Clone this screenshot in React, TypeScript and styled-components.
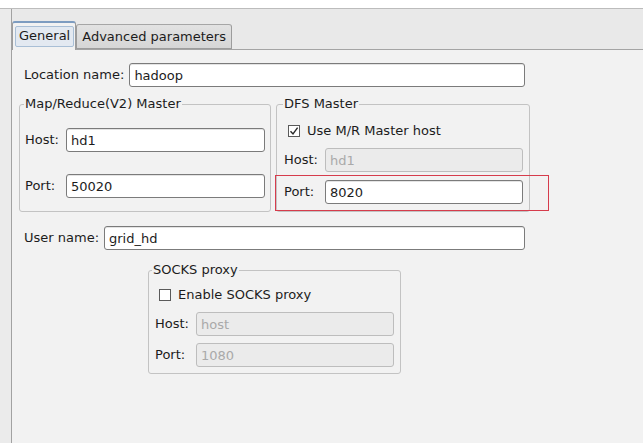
import { FC, ReactNode } from "react";
import styled, { createGlobalStyle } from "styled-components";

const GlobalStyle = createGlobalStyle`
  html, body {
    margin: 0;
    padding: 0;
    background: #ebebeb;
  }
  body {
    font-family: "DejaVu Sans", "Liberation Sans", sans-serif;
    font-size: 13px;
    color: #1c1c1c;
  }
`;

const Page = styled.div`
  width: 643px;
  height: 443px;
  overflow: hidden;
  display: flex;
  flex-direction: column;
  background: #ebebeb;
`;

const TopStrip = styled.div`
  height: 8px;
  flex: none;
  background: #ffffff;
  border-bottom: 1px solid #bcbcbc;
`;

const Body = styled.div`
  flex: 1;
  display: flex;
  min-height: 0;
`;

const Gutter = styled.div`
  width: 11px;
  flex: none;
  background: #ebebeb;
`;

const TabWidget = styled.div`
  flex: 1;
  display: flex;
  flex-direction: column;
  border-left: 1px solid #a2a2a2;
`;

const TabBar = styled.div`
  height: 40px;
  flex: none;
  display: flex;
  align-items: flex-end;
  background: #e9e9e9;
  border-bottom: 1px solid #a4a4a4;
`;

const Tab = styled.div<{ $active?: boolean }>`
  box-sizing: border-box;
  display: flex;
  align-items: center;
  height: ${({ $active }) => ($active ? "29px" : "25px")};
  margin-bottom: ${({ $active }) => ($active ? "-1px" : "0")};
  padding: ${({ $active }) => ($active ? "2px 1px 3px 2px" : "1px 1px 0")};
  border: 1px solid #9c9c9c;
  border-bottom: ${({ $active }) => ($active ? "none" : "1px solid #9c9c9c")};
  border-top: ${({ $active }) =>
    $active ? "2px solid #7d9cc0" : "1px solid #a6a6a6"};
  border-radius: 3px 3px 0 0;
  background: ${({ $active }) =>
    $active ? "#f2f2f2" : "linear-gradient(#e2e2e2, #d6d6d6)"};
  color: #1c1c1c;
`;

const TabLabel = styled.span<{ $focus?: boolean }>`
  padding: 1px 3px 2px;
  border: 1px solid ${({ $focus }) => ($focus ? "#a9bfd6" : "transparent")};
  border-radius: 2px;
  background: ${({ $focus }) => ($focus ? "#e3e9f1" : "transparent")};
  line-height: 16px;
`;

const Panel = styled.div`
  flex: 1;
  background: #f2f2f2;
  padding: 13px 0 0 12px;
`;

const Form = styled.div`
  width: 501px;
  display: flex;
  flex-direction: column;
`;

const Row = styled.div`
  display: flex;
  align-items: center;
  gap: 5px;
`;

const Label = styled.span`
  white-space: nowrap;
  line-height: 16px;
`;

const Input = styled.div<{ $disabled?: boolean }>`
  box-sizing: border-box;
  flex: 1;
  height: 24px;
  display: flex;
  align-items: center;
  padding: 0 4px;
  border: 1px solid ${({ $disabled }) => ($disabled ? "#bdbdbd" : "#7b7b7b")};
  border-radius: 3px;
  background: ${({ $disabled }) => ($disabled ? "#ebebeb" : "#ffffff")};
  color: ${({ $disabled }) => ($disabled ? "#a9a9a9" : "#1c1c1c")};
  box-shadow: ${({ $disabled }) =>
    $disabled ? "none" : "inset 0 1px 0 #e4e4e4"};
`;

const GroupRow = styled.div`
  display: flex;
  gap: 5px;
  margin: 9px -5px 0;
`;

const Group = styled.fieldset<{ $width: number; $pad: string }>`
  box-sizing: border-box;
  width: ${({ $width }) => $width}px;
  margin: 0;
  min-width: 0;
  padding: ${({ $pad }) => $pad};
  border: 1px solid #c3c3c3;
  border-radius: 3px;
  display: flex;
  flex-direction: column;
`;

const Legend = styled.legend<{ $indent: number }>`
  padding: 0 1px;
  margin-left: ${({ $indent }) => $indent}px;
  line-height: 16px;
`;

const FieldGrid = styled.div<{ $rowGap: number; $top: number }>`
  display: grid;
  grid-template-columns: auto 1fr;
  column-gap: 7px;
  row-gap: ${({ $rowGap }) => $rowGap}px;
  margin-top: ${({ $top }) => $top}px;
  align-items: center;
`;

const CheckRow = styled.label`
  display: flex;
  align-items: center;
  gap: 7px;
  height: 18px;
  margin-left: 4px;
`;

const CheckBox = styled.span`
  box-sizing: border-box;
  width: 12px;
  height: 12px;
  border: 1px solid #5a5a5a;
  background: #ffffff;
  display: flex;
  align-items: center;
  justify-content: center;
`;

const PortCell = styled.div`
  position: relative;
  grid-column: 1 / span 2;
  display: grid;
  grid-template-columns: subgrid;
  align-items: center;
`;

/* red annotation box drawn over the DFS port row */
const Highlight = styled.div`
  position: absolute;
  left: -9px;
  top: -5px;
  width: 274px;
  height: 36px;
  box-sizing: border-box;
  border: 1px solid rgb(214, 60, 76);
  pointer-events: none;
`;

const UserRow = styled(Row)`
  margin-top: 14px;
`;

const SocksWrap = styled.div`
  margin: 12px 0 0 124px;
`;

const Field: FC<{ label: string; value: string; disabled?: boolean }> = ({
  label,
  value,
  disabled,
}) => (
  <>
    <Label>{label}</Label>
    <Input $disabled={disabled}>{value}</Input>
  </>
);

const Check: FC<{ checked?: boolean; children: ReactNode }> = ({
  checked,
  children,
}) => (
  <CheckRow>
    <CheckBox>
      {checked && (
        <svg width="10" height="10" viewBox="0 0 10 10">
          <path
            d="M1.5 5.2 L4 8 L8.6 1.6"
            fill="none"
            stroke="#2a2a2a"
            strokeWidth="1.4"
          />
        </svg>
      )}
    </CheckBox>
    <Label>{children}</Label>
  </CheckRow>
);

export default function App() {
  return (
    <>
      <GlobalStyle />
      <Page>
        <TopStrip />
        <Body>
          <Gutter />
          <TabWidget>
            <TabBar>
              <Tab $active>
                <TabLabel $focus>General</TabLabel>
              </Tab>
              <Tab>
                <TabLabel>Advanced parameters</TabLabel>
              </Tab>
            </TabBar>
            <Panel>
              <Form>
                <Row>
                  <Label>Location name:</Label>
                  <Input>hadoop</Input>
                </Row>

                <GroupRow>
                  <Group $width={253} $pad="16px 5px 13px 5px">
                    <Legend $indent={-1}>Map/Reduce(V2) Master</Legend>
                    <FieldGrid $rowGap={22} $top={0}>
                      <Field label="Host:" value="hd1" />
                      <Field label="Port:" value="50020" />
                    </FieldGrid>
                  </Group>

                  <Group $width={255} $pad="10px 6px 7px 7px">
                    <Legend $indent={-1}>DFS Master</Legend>
                    <Check checked>Use M/R Master host</Check>
                    <FieldGrid $rowGap={8} $top={8}>
                      <Field label="Host:" value="hd1" disabled />
                      <PortCell>
                        <Highlight />
                        <Field label="Port:" value="8020" />
                      </PortCell>
                    </FieldGrid>
                  </Group>
                </GroupRow>

                <UserRow>
                  <Label>User name:</Label>
                  <Input>grid_hd</Input>
                </UserRow>

                <SocksWrap>
                  <Group $width={253} $pad="8px 6px 6px 6px">
                    <Legend $indent={-3}>SOCKS proxy</Legend>
                    <Check>Enable SOCKS proxy</Check>
                    <FieldGrid $rowGap={7} $top={8}>
                      <Field label="Host:" value="host" disabled />
                      <Field label="Port:" value="1080" disabled />
                    </FieldGrid>
                  </Group>
                </SocksWrap>
              </Form>
            </Panel>
          </TabWidget>
        </Body>
      </Page>
    </>
  );
}
